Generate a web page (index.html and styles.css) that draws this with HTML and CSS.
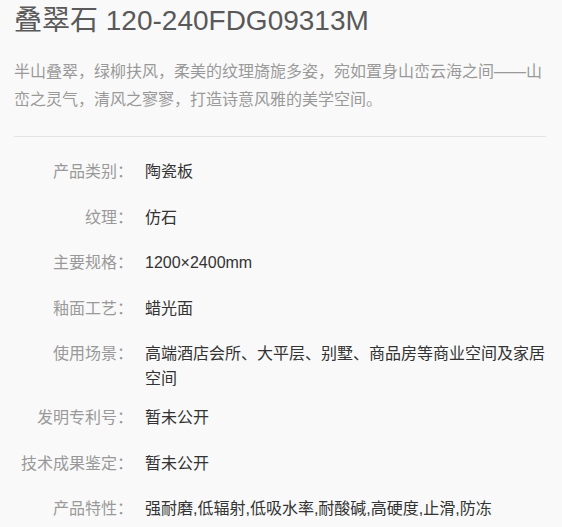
FILE: index.html
```html
<!DOCTYPE html>
<html lang="zh-CN">

<head>
    <meta charset="UTF-8">
    <meta name="viewport" content="width=device-width, initial-scale=1.0">
    <title>叠翠石 120-240FDG09313M</title>
    <link rel="stylesheet" href="styles.css">
</head>

<body>
    <section class="product">
        <h1 class="product-title">叠翠石 120-240FDG09313M</h1>
        <p class="product-desc">半山叠翠，绿柳扶风，柔美的纹理旖旎多姿，宛如置身山峦云海之间——山峦之灵气，清风之寥寥，打造诗意风雅的美学空间。</p>
        <div class="divider"></div>
        <div class="specs">
            <div class="row">
                <span class="label">产品类别：</span>
                <span class="value">陶瓷板</span>
            </div>
            <div class="row">
                <span class="label">纹理：</span>
                <span class="value">仿石</span>
            </div>
            <div class="row">
                <span class="label">主要规格：</span>
                <span class="value">1200×2400mm</span>
            </div>
            <div class="row">
                <span class="label">釉面工艺：</span>
                <span class="value">蜡光面</span>
            </div>
            <div class="row">
                <span class="label">使用场景：</span>
                <span class="value">高端酒店会所、大平层、别墅、商品房等商业空间及家居空间</span>
            </div>
            <div class="row">
                <span class="label">发明专利号：</span>
                <span class="value">暂未公开</span>
            </div>
            <div class="row">
                <span class="label">技术成果鉴定：</span>
                <span class="value">暂未公开</span>
            </div>
            <div class="row">
                <span class="label">产品特性：</span>
                <span class="value">强耐磨,低辐射,低吸水率,耐酸碱,高硬度,止滑,防冻</span>
            </div>
        </div>
    </section>
</body>

</html>
```

FILE: styles.css
```css
body {
    margin: 0;
    background-color: #f9f9f9;
    font-family: "Liberation Sans", "Noto Sans CJK SC", sans-serif;
}

.product {
    padding: 0 16px 0 14px;
}

.product-title {
    margin: 0;
    padding-top: 2px;
    font-size: 28px;
    font-weight: normal;
    line-height: 38px;
    color: #595959;
}

.product-desc {
    margin: 18px 0 0;
    font-size: 16px;
    line-height: 28px;
    color: #999;
}

.divider {
    margin-top: 22px;
    height: 1px;
    background-color: #e3e3e3;
}

.specs {
    padding-top: 22px;
}

.row {
    display: flex;
    gap: 12px;
    min-height: 31.5px;
    margin-bottom: 14px;
    font-size: 16px;
    line-height: 25px;
}

.label {
    flex: 0 0 119px;
    text-align: right;
    color: #999;
}

.value {
    flex: 1;
    color: #333;
}
```
